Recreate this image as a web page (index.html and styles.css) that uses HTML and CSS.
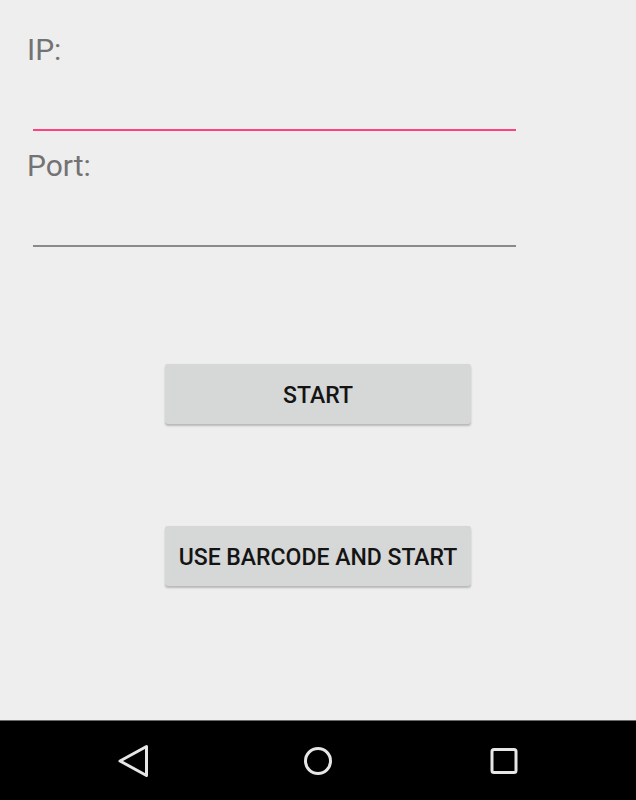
FILE: index.html
```html
<!DOCTYPE html>
<html>
<head>
<meta charset="utf-8">
<link rel="stylesheet" href="styles.css">
</head>
<body>
<div class="screen">
  <div class="label">IP:</div>
  <div class="field field-active"></div>
  <div class="label label-port">Port:</div>
  <div class="field"></div>
  <div class="actions">
    <button class="btn">START</button>
    <button class="btn btn-second">USE BARCODE AND START</button>
  </div>
</div>
<nav class="navbar">
  <svg class="nav-icon" viewBox="0 0 40 40" width="40" height="40"><polygon points="33.5,5.5 33.5,34.5 7,20" fill="none" stroke="#e6e6e6" stroke-width="3" stroke-linejoin="round"/></svg>
  <svg class="nav-icon" viewBox="0 0 40 40" width="40" height="40"><circle cx="20" cy="20" r="12.5" fill="none" stroke="#e6e6e6" stroke-width="3"/></svg>
  <svg class="nav-icon" viewBox="0 0 40 40" width="40" height="40"><rect x="8" y="8.5" width="24" height="23" rx="2" fill="none" stroke="#e6e6e6" stroke-width="3"/></svg>
</nav>
</body>
</html>
```
FILE: styles.css
```css
html, body {
  margin: 0;
  padding: 0;
}
body {
  background: #eeeeee;
  font-family: Roboto, "Noto Sans", sans-serif;
  width: 636px;
  height: 800px;
  overflow: hidden;
}
.screen {
  height: 720px;
  box-sizing: border-box;
  padding-top: 32px;
  display: flex;
  flex-direction: column;
}
.label {
  margin-left: 27px;
  font-size: 30px;
  line-height: 35px;
  height: 35px;
  color: #737373;
}
.label-port {
  margin-top: 17px;
}
.field {
  margin-left: 33px;
  width: 483px;
  height: 62px;
  border-bottom: 2px solid #8a8a8a;
}
.field-active {
  border-bottom-color: #ff4081;
}
.actions {
  display: flex;
  flex-direction: column;
  align-items: center;
  gap: 102px;
  margin-top: 117px;
}
.btn {
  width: 306px;
  height: 60px;
  box-sizing: border-box;
  border: none;
  border-radius: 3px;
  background: #d6d7d7;
  box-shadow: 0 2px 2px rgba(0,0,0,0.22), 0 0 1px rgba(0,0,0,0.08);
  font-family: Roboto, sans-serif;
  font-weight: 500;
  font-size: 23px;
  color: #141414;
  padding: 3px 0 0 0;
  display: flex;
  align-items: center;
  justify-content: center;
}
.navbar {
  height: 80px;
  box-sizing: border-box;
  background: #000;
  border-top: 1px solid #6a6a6a;
  display: flex;
  align-items: center;
  justify-content: center;
  gap: 145.5px;
}
.nav-icon {
  display: block;
}
```
